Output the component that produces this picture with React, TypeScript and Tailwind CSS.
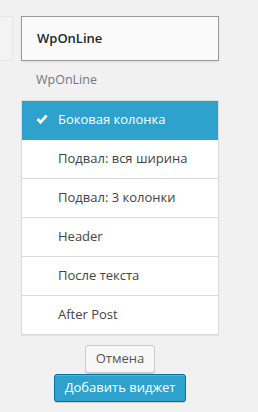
import React from "react";

const rows = [
  "Подвал: вся ширина",
  "Подвал: 3 колонки",
  "Header",
  "После текста",
  "After Post",
];

export default function App() {
  return (
    <div
      className="w-[258px] h-[412px] bg-[#f1f1f1] flex items-start overflow-hidden"
      style={{ fontFamily: '"Open Sans", "Noto Sans", sans-serif' }}
    >
      <div className="w-[13px] h-[45px] mt-4 border border-l-0 border-[#e6e6e6] bg-[#f3f3f3] shrink-0" />
      <div className="ml-[8px] w-[198px] flex flex-col shrink-0">
        <div className="mt-4 h-[45px] border border-[#999999] bg-[#fafafa] shadow-[0_1px_2px_rgba(0,0,0,0.08)] flex items-center pl-[15px]">
          <span className="text-[13px] font-semibold text-[#23282d]">WpOnLine</span>
        </div>
        <div className="h-[39px] flex items-center pl-[15px] text-[12.5px] text-[#72777c]">
          WpOnLine
        </div>
        <div className="border-t border-x border-[#dcdcde] bg-white shadow-[0_1px_1px_rgba(0,0,0,0.06)]">
          <div className="h-[39px] bg-[#2ea2cc] border-b border-[#2ea2cc] flex items-center text-white text-[13px] relative pl-[36px]">
            <svg
              className="absolute left-[14px] top-[13px]"
              width="12"
              height="11"
              viewBox="0 0 12 11"
            >
              <path d="M0.5 6 L2.6 3.9 L4.6 6.2 L9.6 0.5 L11.6 2.5 L4.6 10.3 Z" fill="white" />
            </svg>
            Боковая колонка
          </div>
          {rows.map((r) => (
            <div
              key={r}
              className="h-[39px] border-b border-[#dcdcde] flex items-center pl-[36px] text-[13px] text-[#444444]"
            >
              {r}
            </div>
          ))}
        </div>
        <div className="flex flex-col items-center mt-[10px] gap-px">
          <button className="h-[28px] px-[10px] border border-[#cccccc] bg-[#f7f7f7] rounded-[3px] text-[13px] text-[#555555] shadow-[0_1px_0_#cccccc]">
            Отмена
          </button>
          <button className="h-[28px] px-[10px] border border-[#0074a2] bg-[#2ea2cc] rounded-[3px] text-[13px] text-white shadow-[inset_0_1px_0_rgba(120,200,230,0.5),0_1px_0_rgba(0,0,0,0.15)]">
            Добавить виджет
          </button>
        </div>
      </div>
    </div>
  );
}
